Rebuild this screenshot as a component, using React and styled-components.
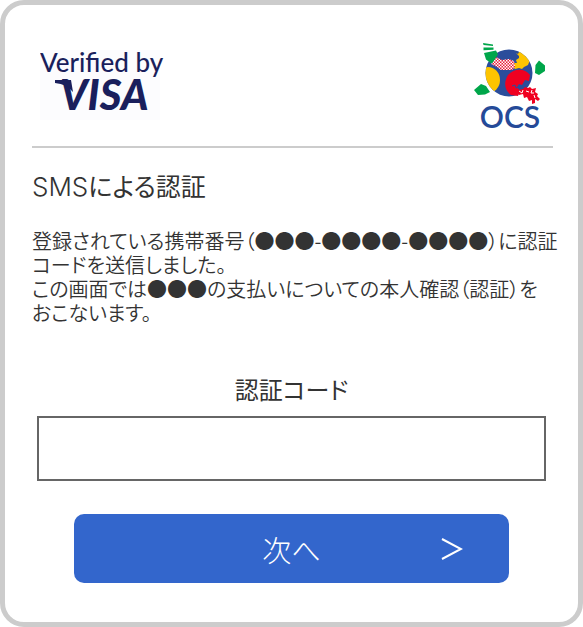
import React, { useState } from "react";
import styled, { createGlobalStyle } from "styled-components";

const GlobalStyle = createGlobalStyle`
  *, *::before, *::after { box-sizing: border-box; }
  body {
    margin: 0;
    background: #fff;
    color: #333;
    font-family: "Noto Sans CJK JP", sans-serif;
    font-weight: 350;
    font-feature-settings: "palt";
  }
`;

const Card = styled.main`
  min-height: 100vh;
  padding: 37px 25px 38px 27px;
  border: 5px solid #ccc;
  border-radius: 24px;
  background: #fff;
`;

const Header = styled.header`
  display: flex;
  justify-content: space-between;
  align-items: flex-start;
  padding: 0 8px;
  height: 106px;
  border-bottom: 2px solid #ccc;
`;

const Logo = styled.svg`
  display: block;
  flex: none;
`;

const Title = styled.h1`
  margin: 19px 0 0;
  font-size: 25px;
  line-height: 36px;
  font-weight: 400;
`;

const Latin = styled.span`
  font-family: Inter, sans-serif;
  font-size: 26px;
  font-weight: 300;
`;

const Message = styled.p`
  margin: 24px -8px 0 0;
  font-size: 20px;
  line-height: 24px;
`;

const Form = styled.form`
  display: flex;
  flex-direction: column;
  padding: 0 7px 0 5px;
  margin-top: 46px;
`;

const Label = styled.label`
  font-size: 24px;
  line-height: 36px;
  font-weight: 400;
  text-align: center;
`;

const CodeInput = styled.input`
  width: 100%;
  height: 65px;
  margin: 9px 0 0;
  padding: 0 16px;
  border: 2px solid #666;
  border-radius: 0;
  background: #fff;
  color: #333;
  font: inherit;
  font-size: 28px;
`;

const NextButton = styled.button`
  display: grid;
  grid-template-columns: 1fr auto 1fr;
  align-items: center;
  height: 69px;
  margin: 33px 37px 0;
  padding: 0 46px;
  border: 0;
  border-radius: 10px;
  background: #36c;
  color: #fff;
  font: inherit;
  font-feature-settings: inherit;
  font-size: 29px;
  font-weight: 300;
  cursor: pointer;
`;

const ButtonText = styled.span`
  grid-column: 2;
`;

const Chevron = styled.svg`
  justify-self: end;
`;

function VisaLogo() {
  return (
    <Logo width="128" height="80" viewBox="0 0 128 80" role="img" aria-label="Verified by VISA">
      <rect y="8" width="120" height="70" fill="#fcfcfe" />
      <g fill="#1a1f5c">
        <text x="0" y="30" fontFamily="Lato, sans-serif" fontSize="26" fontWeight="500" fontVariantLigatures="none">Verified by</text>
        <text x="20" y="68" fontFamily="Lato, sans-serif" fontSize="42" fontWeight="900" fontStyle="italic">VISA</text>
        <path d="M15 38h16l2 12q-6-8-18-9z" />
      </g>
    </Logo>
  );
}

function OcsLogo() {
  return (
    <Logo width="72" height="96" viewBox="0 0 72 96" role="img" aria-label="OCS">
      <defs>
        <clipPath id="globe"><circle cx="36" cy="31" r="23.500" /></clipPath>
        <pattern id="checks" width="3" height="3" patternUnits="userSpaceOnUse">
          <rect width="3" height="3" fill="#e8203c" />
          <path d="M0 0h1.500v1.500h-1.500zM1.500 1.500h1.500v1.500h-1.500z" fill="#fff" />
        </pattern>
      </defs>
      <circle cx="36" cy="31" r="23.500" fill="#2b4d9b" />
      <g clipPath="url(#globe)">
        <ellipse cx="15" cy="38" rx="12" ry="13" fill="#fdc400" />
        <path d="M43 11l2 1 2-4 5 1 5 9-2 5-4 2-2 2-3-1-4 1-2-2 0-4 4 0-1-3 3-2 0-2z" fill="#fdc400" />
      </g>
      <path d="M18 22l5-7 6 3 7-1 5 2 1 6-3 3-11 0-4-3z" fill="url(#checks)" />
      <path d="M11 11l12-2.500 2 4-6 9-2-1-4-3zM10 1l10 1.500v1.500l-9.500-1zM10.500 5.500l10 0v2.200l-10 .5z" fill="#00a64a" />
      <path d="M1 48l7-6 5 2 4 6-5 2.500-7 .5zM62.500 23l3.500-4.500 6 5v5.500l-6 4-4-2z" fill="#00a64a" />
      <path d="M57 33C52 26 41 26 35 33C30 41 32 49 38 53L45 54L47 49L44 45L46 42L49 43L52 38L56 39z" fill="#f00020" />
      <path d="M45 48l5-1 2-2 3 1 2-1 2 2 4-1-1 4 3 2-1 2 3 3-2 2-3-2 0 4-3 1 0-4-3 1-2-4-3 1-1-4-4 1z" fill="#f00020" />
      <path d="M46 49l3 2 1-3M53 49l3 1M59 48l-1 3 3 0M61 53l1 3" fill="none" stroke="#fff" strokeWidth="1" />
      <path d="M39 44l3-1 1 3 3-1" fill="none" stroke="#2b4d9b" strokeWidth="1" />
      <text x="37" y="86" textAnchor="middle" fontFamily="Lato, sans-serif" fontSize="30" fontWeight="600" fill="#254a98">OCS</text>
    </Logo>
  );
}

export default function App() {
  const [code, setCode] = useState("");

  return (
    <>
      <GlobalStyle />
      <Card>
        <Header>
          <VisaLogo />
          <OcsLogo />
        </Header>
        <Title><Latin>SMS</Latin>による認証</Title>
        <Message>
          登録されている携帯番号（●●●-●●●●-●●●●）に認証<br />
          コードを送信しました。<br />
          この画面では●●●の支払いについての本人確認（認証）を<br />
          おこないます。
        </Message>
        <Form onSubmit={(event) => event.preventDefault()}>
          <Label htmlFor="code">認証コード</Label>
          <CodeInput
            id="code"
            inputMode="numeric"
            autoComplete="one-time-code"
            value={code}
            onChange={(event) => setCode(event.target.value)}
          />
          <NextButton type="submit">
            <ButtonText>次へ</ButtonText>
            <Chevron width="22" height="24" viewBox="0 0 22 24" fill="none" stroke="currentColor" strokeWidth="2" aria-hidden="true">
              <path d="M1 2l19 10L1 22" />
            </Chevron>
          </NextButton>
        </Form>
      </Card>
    </>
  );
}
